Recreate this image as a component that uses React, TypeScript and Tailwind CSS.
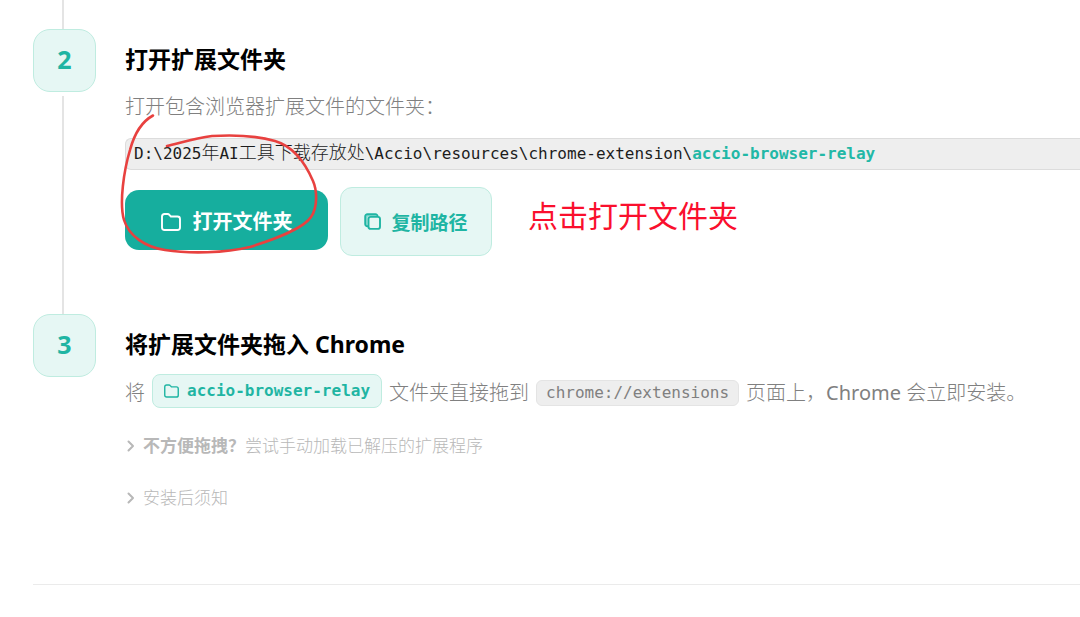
import type { ReactNode } from 'react';

const FolderIcon = ({ className }: { className?: string }) => (
  <svg viewBox="0 0 20 18" fill="none" stroke="currentColor" strokeWidth="1.9" strokeLinejoin="round" className={className} aria-hidden="true">
    <path d="M1 3.6C1 2 1.9 1 3.5 1h3.1c.8 0 1.3.2 1.8.8l1.5 1.7h6.6c1.5 0 2.5 1 2.5 2.5v8.500c0 1.6-1 2.5-2.5 2.5h-13C1.9 17 1 16.1 1 14.5z" />
  </svg>
);

const CopyIcon = ({ className }: { className?: string }) => (
  <svg viewBox="0 0 17 17" fill="none" stroke="currentColor" className={className} aria-hidden="true">
    <rect x="4.5" y="3.9" width="11.5" height="12" rx="2.2" strokeWidth="1.9" />
    <path d="M4 13.2H3.400A2.2 2.2 0 0 1 1.200 11V3.400a2.200 2.200 0 0 1 2.200-2.200h8a2.200 2.200 0 0 1 2.200 2.200" strokeWidth="1.9" />
    <path d="M2.600 12.500V4.200a1.700 1.700 0 0 1 1.700-1.700h8" strokeWidth="1.8" opacity=".45" />
  </svg>
);

const ChevronIcon = () => (
  <svg viewBox="0 0 10 14" fill="none" stroke="currentColor" strokeWidth="2" strokeLinecap="round" strokeLinejoin="round" className="h-[14px] w-[10px] shrink-0" aria-hidden="true">
    <path d="M3.500 2.500 8 7l-4.500 4.500" />
  </svg>
);

const notes = [
  { lead: '不方便拖拽？', text: '尝试手动加载已解压的扩展程序' },
  { lead: '', text: '安装后须知' },
];

function Step({ number, title, last, children }: { number: number; title: string; last?: boolean; children: ReactNode }) {
  return (
    <li className="flex gap-[29px]">
      <div className="flex w-[63px] shrink-0 flex-col">
        <div className="flex h-[63px] w-[63px] items-center justify-center rounded-[17px] border border-[#bfece0] bg-[#e6f7f4] pb-[2px] text-[25px] font-bold text-[#1fb5a3]">
          {number}
        </div>
        {!last && <div className="mt-1 ml-[29px] w-[2px] flex-1 bg-[#e4e4e4]" />}
      </div>
      <div className="relative min-w-0 flex-1 pt-[14px]">
        <h2 className="text-[23px] leading-8 font-bold text-black">{title}</h2>
        {children}
      </div>
    </li>
  );
}

export default function App() {
  return (
    <main className="overflow-hidden bg-white pb-8 pl-[33px] font-['Noto_Sans','Noto_Sans_CJK_SC',sans-serif]">
      {/* Tail of the previous step */}
      <div className="flex h-[29px] w-[63px]">
        <div className="ml-[29px] w-[2px] bg-[#e4e4e4]" />
      </div>

      <ol lang="zh-CN">
        <Step number={2} title="打开扩展文件夹">
          <p className="mt-[18px] text-[20px] leading-7 font-light text-[#808080]">打开包含浏览器扩展文件的文件夹：</p>
          <code className="mt-[17px] block h-8 overflow-hidden rounded-l-md border border-r-0 border-[#dcdcdc] bg-[#eeeeee] pl-2 font-['DejaVu_Sans_Mono','Noto_Sans_CJK_SC',monospace] text-[16px] leading-7 whitespace-nowrap text-[#1c1c1c]">
            D:\2025<span className="text-[18px] font-light">年</span>AI
            <span className="text-[18px] font-light">工具下载存放处</span>\Accio\resources\chrome-extension\
            <span className="font-bold text-[#22b8a6]">accio-browser-relay</span>
          </code>
          <div className="mt-[17px] mb-[58px] flex items-center gap-3">
            <button type="button" className="mb-[3px] flex h-[60px] w-[203px] items-center justify-center gap-3 rounded-[14px] bg-[#16ae9e] pt-[3px] text-[20px] font-bold text-white">
              <FolderIcon className="h-[18px] w-5" />
              打开文件夹
            </button>
            <button type="button" className="flex h-[69px] w-[152px] items-center justify-center gap-[10px] rounded-[12px] border border-[#bfece0] bg-[#e6f7f4] text-[19px] font-bold text-[#1fb5a3]">
              <CopyIcon className="h-[17px] w-[17px]" />
              <span className="pt-1">复制路径</span>
            </button>
            <span className="ml-6 pb-3 text-[30px] leading-10 text-[#fa0f2d]">点击打开文件夹</span>
          </div>

          {/* Hand-drawn circle over the first button */}
          <svg viewBox="117 109 206 148" className="pointer-events-none absolute top-20 -left-2 h-[148px] w-[206px]" fill="none" stroke="#e8413f" strokeWidth="2.6" strokeLinecap="round" strokeLinejoin="round" aria-hidden="true">
            <path d="M153 115.5C141 122 134 135 130 150C124 170 119 203 124 220C129 236 145 247 165 250C190 254 225 253 250 247C275 239 303 229 311 217C318 207 317 190 313 181C304 160 292 146 275 141C255 135 230 135 212 136C195 138 180 143 167 146" />
          </svg>
        </Step>

        <Step number={3} title="将扩展文件夹拖入 Chrome" last>
          <p className="mt-[14px] flex items-center gap-[7px] text-[20px] leading-7 font-light whitespace-nowrap text-[#808080]">
            <span className="pt-1">将</span>
            <span className="flex h-[34px] items-center gap-2 rounded-[8px] border border-[#bfece0] bg-[#e6f7f4] px-[11px] font-['DejaVu_Sans_Mono',monospace] text-[16px] font-bold text-[#1fb5a3]">
              <FolderIcon className="h-[14px] w-[15px]" />
              accio-browser-relay
            </span>
            <span className="pt-1">文件夹直接拖到</span>
            <code className="mt-1 rounded-md border border-[#e4e4e4] bg-[#eeeeee] px-[9px] font-['DejaVu_Sans_Mono',monospace] text-[16px] leading-6 font-normal text-[#808080]">
              chrome://extensions
            </code>
            <span className="pt-1">页面上，<span className="font-normal">Chrome</span> 会立即安装。</span>
          </p>
          <div className="mt-6 flex flex-col gap-6">
            {notes.map((note) => (
              <details key={note.text}>
                <summary className="flex cursor-pointer list-none items-center gap-2 text-[17px] leading-7 font-light text-[#b8b8b8]">
                  <ChevronIcon />
                  <span>
                    {note.lead && <strong className="font-bold">{note.lead}</strong>}
                    {note.text}
                  </span>
                </summary>
              </details>
            ))}
          </div>
        </Step>
      </ol>

      <hr className="mt-[72px] border-[#ebebeb]" />
    </main>
  );
}
